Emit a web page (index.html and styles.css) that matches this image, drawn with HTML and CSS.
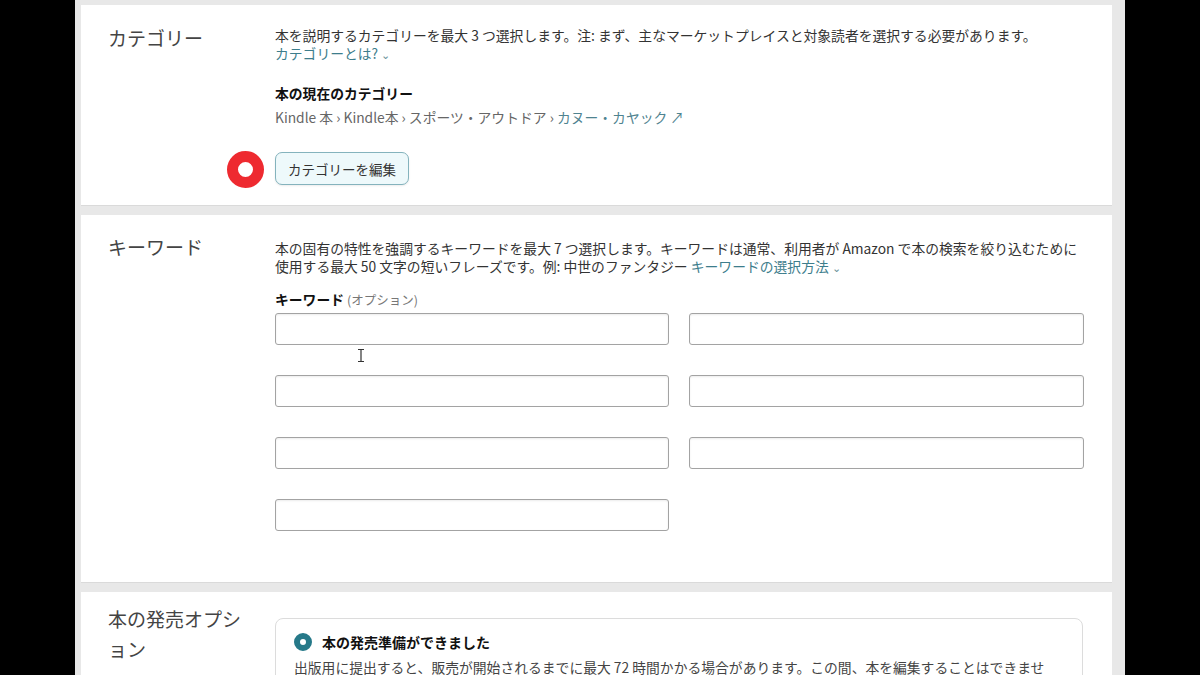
FILE: index.html
```html
<!DOCTYPE html>
<html lang="ja">
<head>
<meta charset="utf-8">
<title>KDP</title>
<link rel="stylesheet" href="styles.css">
</head>
<body>
<div class="stage">
  <section class="card card-cat">
    <h2 class="sec-title">カテゴリー</h2>
    <div class="sec-body">
      <p class="desc">本を説明するカテゴリーを最大 3 つ選択します。注: まず、主なマーケットプレイスと対象読者を選択する必要があります。<br><a class="link">カテゴリーとは? <span class="chev">⌄</span></a></p>
      <h3 class="sub">本の現在のカテゴリー</h3>
      <p class="crumb">Kindle 本 › Kindle本 › スポーツ・アウトドア › <a class="link">カヌー・カヤック ↗</a></p>
      <div class="btn-wrap">
        <span class="marker"></span>
        <button class="btn">カテゴリーを編集</button>
      </div>
    </div>
  </section>

  <section class="card card-kw">
    <h2 class="sec-title">キーワード</h2>
    <div class="sec-body">
      <p class="desc">本の固有の特性を強調するキーワードを最大 7 つ選択します。キーワードは通常、利用者が Amazon で本の検索を絞り込むために<br>使用する最大 50 文字の短いフレーズです。例: 中世のファンタジー <a class="link">キーワードの選択方法 <span class="chev">⌄</span></a></p>
      <div class="label"><b>キーワード</b> <span class="opt">(オプション)</span></div>
      <div class="kw-grid">
        <input class="kw" type="text">
        <input class="kw" type="text">
        <input class="kw" type="text">
        <input class="kw" type="text">
        <input class="kw" type="text">
        <input class="kw" type="text">
        <input class="kw" type="text">
        <svg class="ibeam" width="8" height="13" viewBox="0 0 8 13"><path d="M1 0.5h6M1 12.5h6M4 0.5v12" stroke="#333" stroke-width="1.2" fill="none"/></svg>
      </div>
    </div>
  </section>

  <section class="card card-rel">
    <h2 class="sec-title rel-title">本の発売オプション</h2>
    <div class="sec-body">
      <div class="opt-box">
        <div class="radio-row"><span class="radio"></span><span class="radio-label">本の発売準備ができました</span></div>
        <p class="opt-text">出版用に提出すると、販売が開始されるまでに最大 72 時間かかる場合があります。この間、本を編集することはできませ</p>
      </div>
    </div>
  </section>
</div>
</body>
</html>
```

FILE: styles.css
```css
html, body {
  margin: 0;
  padding: 0;
  background: #000;
  height: 675px;
  overflow: hidden;
}
body {
  font-family: "Noto Sans CJK JP", "Noto Sans", sans-serif;
  color: #333;
}
.stage {
  width: 1050px;
  height: 675px;
  margin: 0 auto;
  background: #e8e8e8;
  padding: 5px 13px 0 6px;
  box-sizing: border-box;
  overflow: hidden;
}
.card {
  background: #fff;
  display: grid;
  grid-template-columns: 167px 1fr;
  padding: 21px 28px 20px 27px;
  margin-bottom: 10px;
  box-shadow: 0 1px 0 #dadada;
}
.sec-title {
  margin: 0;
  font-size: 19px;
  line-height: 24px;
  font-weight: 400;
  color: #444;
}
.sec-body {
  min-width: 0;
}
.desc {
  margin: 0;
  font-size: 13.8px;
  line-height: 18px;
  height: 36px;
  color: #333;
  white-space: nowrap;
}
.link {
  color: #3d7d8c;
  text-decoration: none;
}
.chev {
  font-size: 11px;
  line-height: 1;
  color: #6a8f99;
}
.sub {
  margin: 22px 0 0;
  font-size: 13.8px;
  line-height: 18px;
  height: 18px;
  font-weight: 700;
  color: #111;
}
.crumb {
  margin: 6px 0 0;
  font-size: 13.8px;
  line-height: 18px;
  height: 18px;
  color: #666;
}
.crumb .link {
  color: #4f8390;
}
.btn-wrap {
  position: relative;
  margin-top: 26px;
  height: 33px;
}
.btn {
  height: 33px;
  width: 134px;
  padding: 0;
  border: 1px solid #84b3bd;
  border-radius: 7px;
  background: #eef9fb;
  font-family: inherit;
  font-size: 13.5px;
  color: #333;
  box-shadow: 0 1px 2px rgba(0,0,0,0.08);
}
.marker {
  position: absolute;
  left: -48px;
  top: -1px;
  width: 15px;
  height: 15px;
  border: 11px solid #ee2a30;
  border-radius: 50%;
  background: #fff;
}
.card-kw {
  padding-top: 24px;
  padding-bottom: 51px;
}
.card-kw .sec-title {
  margin-top: -4px;
}
.label {
  margin-top: 15px;
  font-size: 13.8px;
  line-height: 18px;
  height: 18px;
  color: #111;
}
.label b {
  font-weight: 700;
}
.opt {
  color: #777;
  font-size: 12.5px;
  line-height: 1;
}
.kw-grid {
  position: relative;
  margin-top: 5px;
  display: grid;
  grid-template-columns: 394px 395px;
  column-gap: 20px;
  row-gap: 30px;
}
.kw {
  height: 32px;
  box-sizing: border-box;
  border: 1px solid #a3a3a3;
  border-radius: 3px;
  box-shadow: inset 0 1px 2px rgba(0,0,0,0.08);
  margin: 0;
  padding: 0 8px;
  font-family: inherit;
  background: #fff;
}
.ibeam {
  position: absolute;
  left: 82px;
  top: 36px;
}
.card-rel {
  padding-top: 12px;
  padding-bottom: 30px;
}
.rel-title {
  line-height: 30px;
  width: 140px;
  line-break: loose;
}
.opt-box {
  border: 1px solid #dcdcdc;
  border-radius: 8px;
  padding: 12px 20px 20px 18px;
  margin-top: 14px;
  margin-right: 1px;
}
.radio-row {
  display: flex;
  align-items: center;
  height: 22px;
}
.radio {
  width: 18px;
  height: 18px;
  box-sizing: border-box;
  border: 6px solid #267989;
  border-radius: 50%;
  background: #fff;
  margin-right: 10px;
}
.radio-label {
  font-size: 14px;
  font-weight: 700;
  color: #111;
}
.opt-text {
  margin: 5px 0 0;
  font-size: 13.8px;
  line-height: 18px;
  color: #444;
  white-space: nowrap;
}
```
